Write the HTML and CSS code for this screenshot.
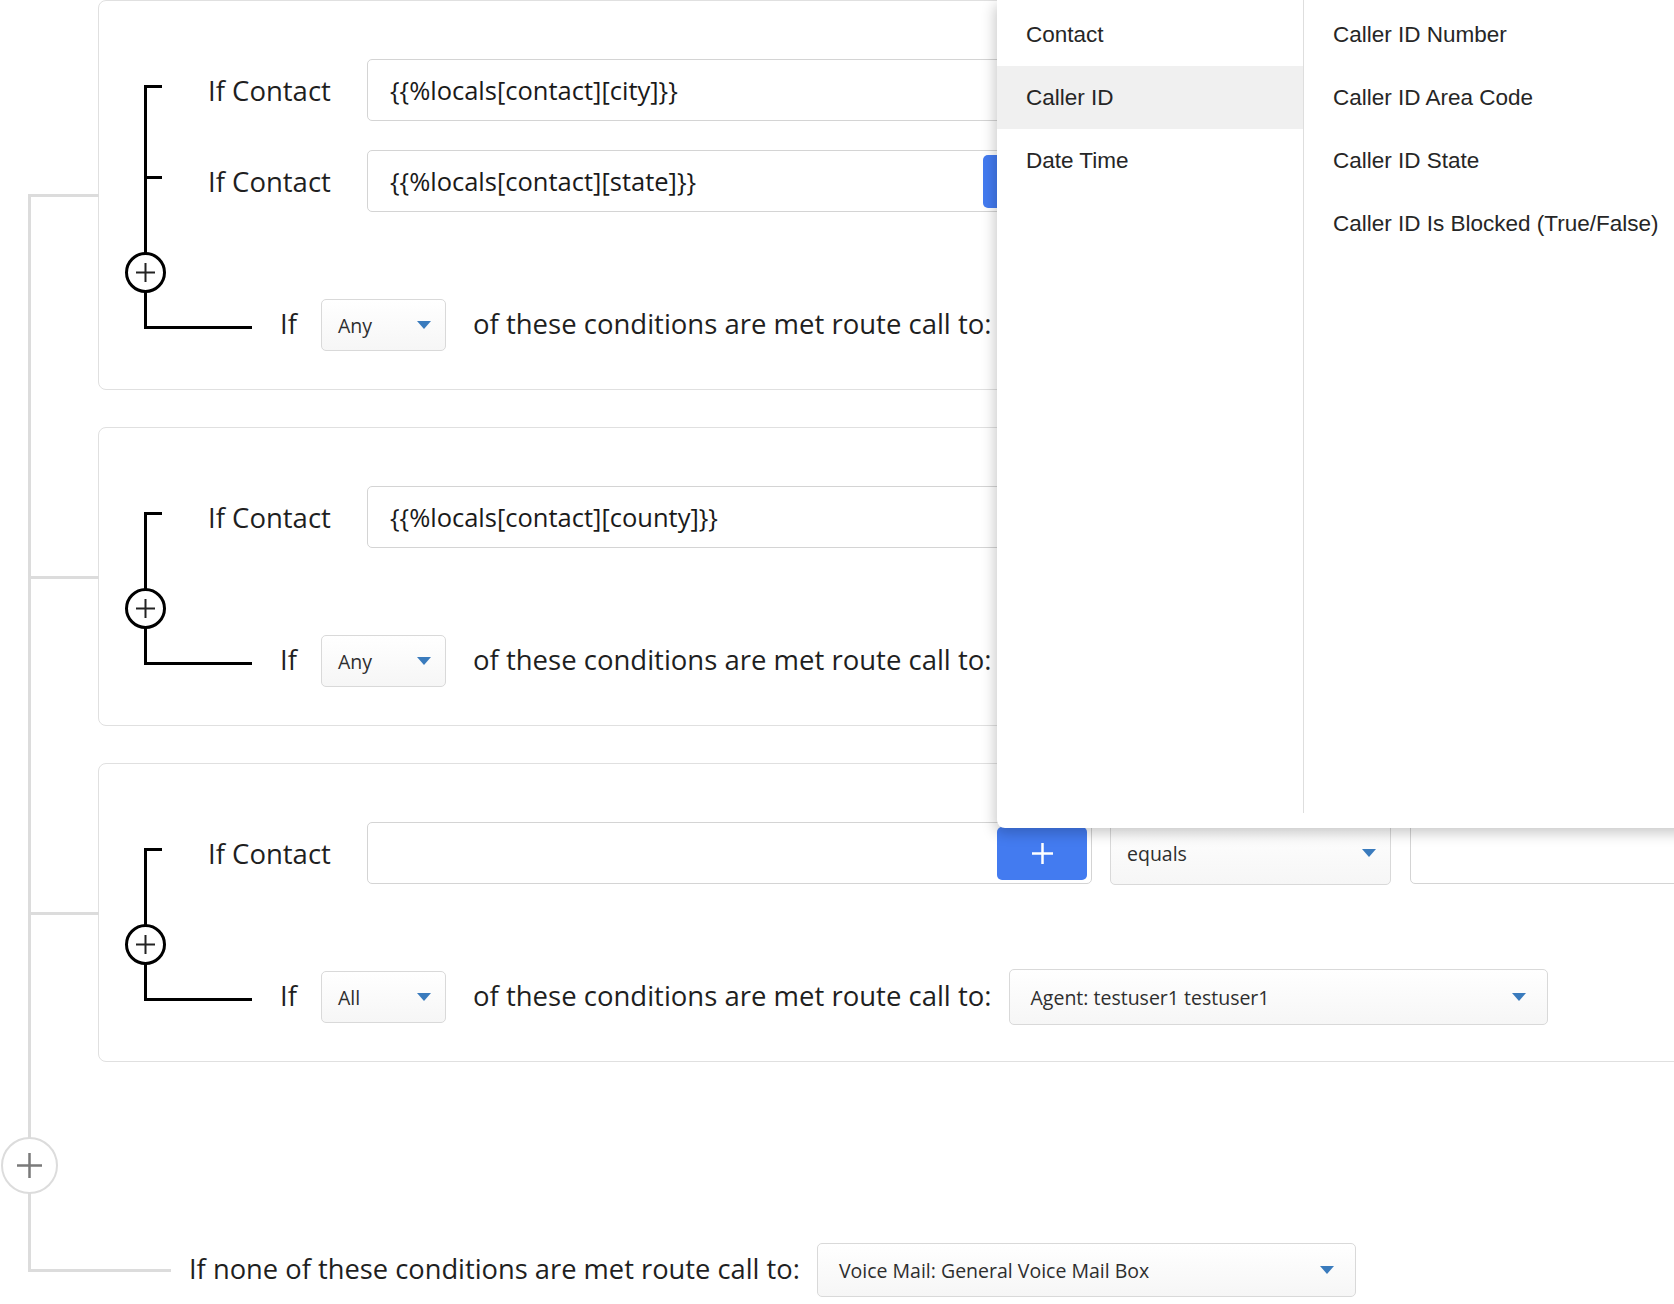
FILE: index.html
```html
<!DOCTYPE html>
<html>
<head>
    <meta charset="utf-8">
    <meta name="viewport" content="width=device-width, initial-scale=1.0">
    <title>Call routing rules</title>
    <link rel="stylesheet" href="styles.css">
</head>
<body>
<main class="flow">

    <!-- Rule 1 -->
    <section class="rule">
        <div class="tree">
            <div class="cond">
                <span class="cond-label">If Contact</span>
                <div class="field">
                    <span>{{%locals[contact][city]}}</span>
                    <button class="pick-btn"><svg width="21" height="21" viewBox="0 0 21 21"><path d="M10.5 0v21M0 10.5h21" stroke="#fff" stroke-width="2.5"/></svg></button>
                </div>
                <div class="select select-op">equals <i class="caret"></i></div>
                <div class="field field-value"></div>
            </div>
            <div class="cond">
                <span class="cond-label">If Contact</span>
                <div class="field field-short">
                    <span>{{%locals[contact][state]}}</span>
                    <button class="pick-btn"><svg width="21" height="21" viewBox="0 0 21 21"><path d="M10.5 0v21M0 10.5h21" stroke="#fff" stroke-width="2.5"/></svg></button>
                </div>
                <div class="select select-op">equals <i class="caret"></i></div>
                <div class="field field-value"></div>
            </div>
            <div class="add">
                <span class="add-btn"><svg width="19" height="19" viewBox="0 0 19 19"><path d="M9.5 0v19M0 9.5h19" stroke="#222" stroke-width="2"/></svg></span>
            </div>
            <div class="final">
                <span class="final-if">If</span>
                <div class="select select-mode">Any <i class="caret"></i></div>
                <span class="final-text">of these conditions are met route call to:</span>
                <div class="select select-target">Agent: testuser1 testuser1 <i class="caret"></i></div>
            </div>
        </div>
    </section>

    <!-- Rule 2 -->
    <section class="rule">
        <div class="tree">
            <div class="cond">
                <span class="cond-label">If Contact</span>
                <div class="field">
                    <span>{{%locals[contact][county]}}</span>
                    <button class="pick-btn"><svg width="21" height="21" viewBox="0 0 21 21"><path d="M10.5 0v21M0 10.5h21" stroke="#fff" stroke-width="2.5"/></svg></button>
                </div>
                <div class="select select-op">equals <i class="caret"></i></div>
                <div class="field field-value"></div>
            </div>
            <div class="add">
                <span class="add-btn"><svg width="19" height="19" viewBox="0 0 19 19"><path d="M9.5 0v19M0 9.5h19" stroke="#222" stroke-width="2"/></svg></span>
            </div>
            <div class="final">
                <span class="final-if">If</span>
                <div class="select select-mode">Any <i class="caret"></i></div>
                <span class="final-text">of these conditions are met route call to:</span>
                <div class="select select-target">Agent: testuser1 testuser1 <i class="caret"></i></div>
            </div>
        </div>
    </section>

    <!-- Rule 3 -->
    <section class="rule">
        <div class="tree">
            <div class="cond">
                <span class="cond-label">If Contact</span>
                <div class="field">
                    <span></span>
                    <button class="pick-btn"><svg width="21" height="21" viewBox="0 0 21 21"><path d="M10.5 0v21M0 10.5h21" stroke="#fff" stroke-width="2.5"/></svg></button>
                </div>
                <div class="select select-op">equals <i class="caret"></i></div>
                <div class="field field-value"></div>
            </div>
            <div class="add">
                <span class="add-btn"><svg width="19" height="19" viewBox="0 0 19 19"><path d="M9.5 0v19M0 9.5h19" stroke="#222" stroke-width="2"/></svg></span>
            </div>
            <div class="final">
                <span class="final-if">If</span>
                <div class="select select-mode">All <i class="caret"></i></div>
                <span class="final-text">of these conditions are met route call to:</span>
                <div class="select select-target">Agent: testuser1 testuser1 <i class="caret"></i></div>
            </div>
        </div>
    </section>

    <div class="add-rule">
        <span class="add-rule-btn"><svg width="25" height="25" viewBox="0 0 25 25"><path d="M12.5 0v25M0 12.5h25" stroke="#7a7a7a" stroke-width="2.5"/></svg></span>
    </div>

    <div class="fallback">
        <span class="fallback-text">If none of these conditions are met route call to:</span>
        <div class="select select-fallback">Voice Mail: General Voice Mail Box <i class="caret"></i></div>
    </div>

    <!-- Variable picker menu, open over the first rule -->
    <div class="picker">
        <ul class="picker-col picker-groups">
            <li class="picker-item">Contact</li>
            <li class="picker-item active">Caller ID</li>
            <li class="picker-item">Date Time</li>
        </ul>
        <ul class="picker-col picker-fields">
            <li class="picker-item">Caller ID Number</li>
            <li class="picker-item">Caller ID Area Code</li>
            <li class="picker-item">Caller ID State</li>
            <li class="picker-item">Caller ID Is Blocked (True/False)</li>
        </ul>
    </div>

</main>
</body>
</html>
```

FILE: styles.css
```css
body {
    margin: 0;
    font-family: "Open Sans", "Noto Sans", sans-serif;
    color: #1f1f1f;
    background: #fff;
    overflow: hidden;
}
.flow {
    position: relative;
}
/* grey trunk that joins all rules */
.flow::before {
    content: "";
    position: absolute;
    left: 28px;
    top: 195px;
    bottom: 25px;
    width: 3px;
    background: #dcdcdc;
}
.rule {
    position: relative;
    margin-left: 98px;
    width: 1700px;
    border: 1px solid #e0e0e0;
    border-radius: 8px;
    padding: 58px 0 38px;
    margin-bottom: 37px;
}
.rule::before {
    content: "";
    position: absolute;
    left: -71px;
    top: calc(50% - 1px);
    width: 71px;
    height: 3px;
    background: #dcdcdc;
}

/* black bracket inside a rule */
.tree {
    position: relative;
    margin-left: 45px;
}
.tree::before {
    content: "";
    position: absolute;
    left: 0;
    top: 26px;
    bottom: 22px;
    width: 3px;
    background: #000;
}
.cond {
    position: relative;
    display: flex;
    align-items: center;
    height: 62px;
    padding-left: 64px;
    margin-bottom: 29px;
}
.cond::before {
    content: "";
    position: absolute;
    left: 0;
    top: 26px;
    width: 18px;
    height: 3px;
    background: #000;
}
.cond-label {
    width: 159px;
    flex-shrink: 0;
    font-size: 27.5px;
}
.field {
    box-sizing: border-box;
    flex-shrink: 0;
    width: 725px;
    height: 62px;
    border: 1px solid #d4d4d4;
    border-radius: 5px;
    display: flex;
    align-items: center;
    justify-content: space-between;
    padding: 0 4px 0 22px;
    font-size: 25.5px;
    color: #1a1a1a;
    background: #fff;
}
.field-short {
    width: 711px;
}
.field-value {
    width: 420px;
    margin-left: 19px;
}
.pick-btn {
    width: 90px;
    height: 53px;
    border: 0;
    border-radius: 5px;
    background: #437bf0;
    display: flex;
    align-items: center;
    justify-content: center;
    padding: 0;
}

/* margin collapses with the last condition's 29px */
.add {
    height: 41px;
    margin-top: 40px;
    margin-bottom: 6px;
}
.add-btn {
    position: relative;
    z-index: 1;
    box-sizing: border-box;
    margin-left: -19px;
    width: 41px;
    height: 41px;
    border: 3px solid #000;
    border-radius: 50%;
    background: #fff;
    display: flex;
    align-items: center;
    justify-content: center;
}

.final {
    position: relative;
    display: flex;
    align-items: center;
    height: 52px;
    padding-left: 136px;
}
.final::before {
    content: "";
    position: absolute;
    left: 0;
    top: 27px;
    width: 108px;
    height: 3px;
    background: #000;
}
.final-if {
    width: 41px;
    flex-shrink: 0;
    font-size: 27.5px;
    padding-bottom: 4px;
}
.final-text {
    margin-left: 27px;
    font-size: 27.5px;
    white-space: nowrap;
    padding-bottom: 4px;
}

/* select boxes */
.select {
    box-sizing: border-box;
    flex-shrink: 0;
    display: flex;
    align-items: center;
    justify-content: space-between;
    border: 1px solid #d9d9d9;
    border-radius: 5px;
    background: linear-gradient(#fff, #f6f6f6);
    font-size: 19.5px;
    color: #2e2e2e;
    white-space: nowrap;
}
.caret {
    width: 0;
    height: 0;
    border-left: 7px solid transparent;
    border-right: 7px solid transparent;
    border-top: 8px solid #3a7bbd;
}
.select-mode {
    width: 125px;
    height: 52px;
    padding: 0 14px 0 16px;
}
.select-op {
    width: 281px;
    height: 64px;
    margin-left: 18px;
    padding: 0 14px 0 16px;
}
.select-target {
    width: 539px;
    height: 56px;
    margin-left: 17px;
    padding: 0 21px 0 21px;
}

/* add rule + fallback */
.add-rule {
    margin-top: 75px;
    height: 57px;
}
.add-rule-btn {
    position: relative;
    z-index: 1;
    box-sizing: border-box;
    margin-left: 1px;
    width: 57px;
    height: 57px;
    border: 2px solid #dcdcdc;
    border-radius: 50%;
    background: #fff;
    display: flex;
    align-items: center;
    justify-content: center;
}
.fallback {
    position: relative;
    display: flex;
    align-items: center;
    height: 54px;
    margin-top: 49px;
    padding-left: 189px;
}
.fallback::before {
    content: "";
    position: absolute;
    left: 28px;
    top: 26px;
    width: 143px;
    height: 3px;
    background: #dcdcdc;
}
.fallback-text {
    font-size: 27.3px;
    white-space: nowrap;
    padding-bottom: 3px;
}
.select-fallback {
    width: 539px;
    height: 54px;
    margin-left: 17px;
    padding: 0 21px 0 21px;
}

/* variable picker menu */
.picker {
    position: absolute;
    z-index: 5;
    top: 0;
    left: 997px;
    width: 720px;
    height: 828px;
    display: flex;
    background: #fff;
    border-radius: 0 0 0 8px;
    box-shadow: -2px 5px 14px rgba(0, 0, 0, 0.22);
    font-family: "Liberation Sans", Arial, sans-serif;
    font-size: 22.5px;
    color: #262626;
}
.picker-col {
    list-style: none;
    margin: 0 0 15px;
    padding: 3px 0 0;
}
.picker-groups {
    width: 306px;
    border-right: 1px solid #dedede;
}
.picker-fields {
    flex: 1;
}
.picker-item {
    height: 63px;
    line-height: 63px;
    padding-left: 29px;
    white-space: nowrap;
}
.picker-item.active {
    background: #f0f0f0;
}
```
